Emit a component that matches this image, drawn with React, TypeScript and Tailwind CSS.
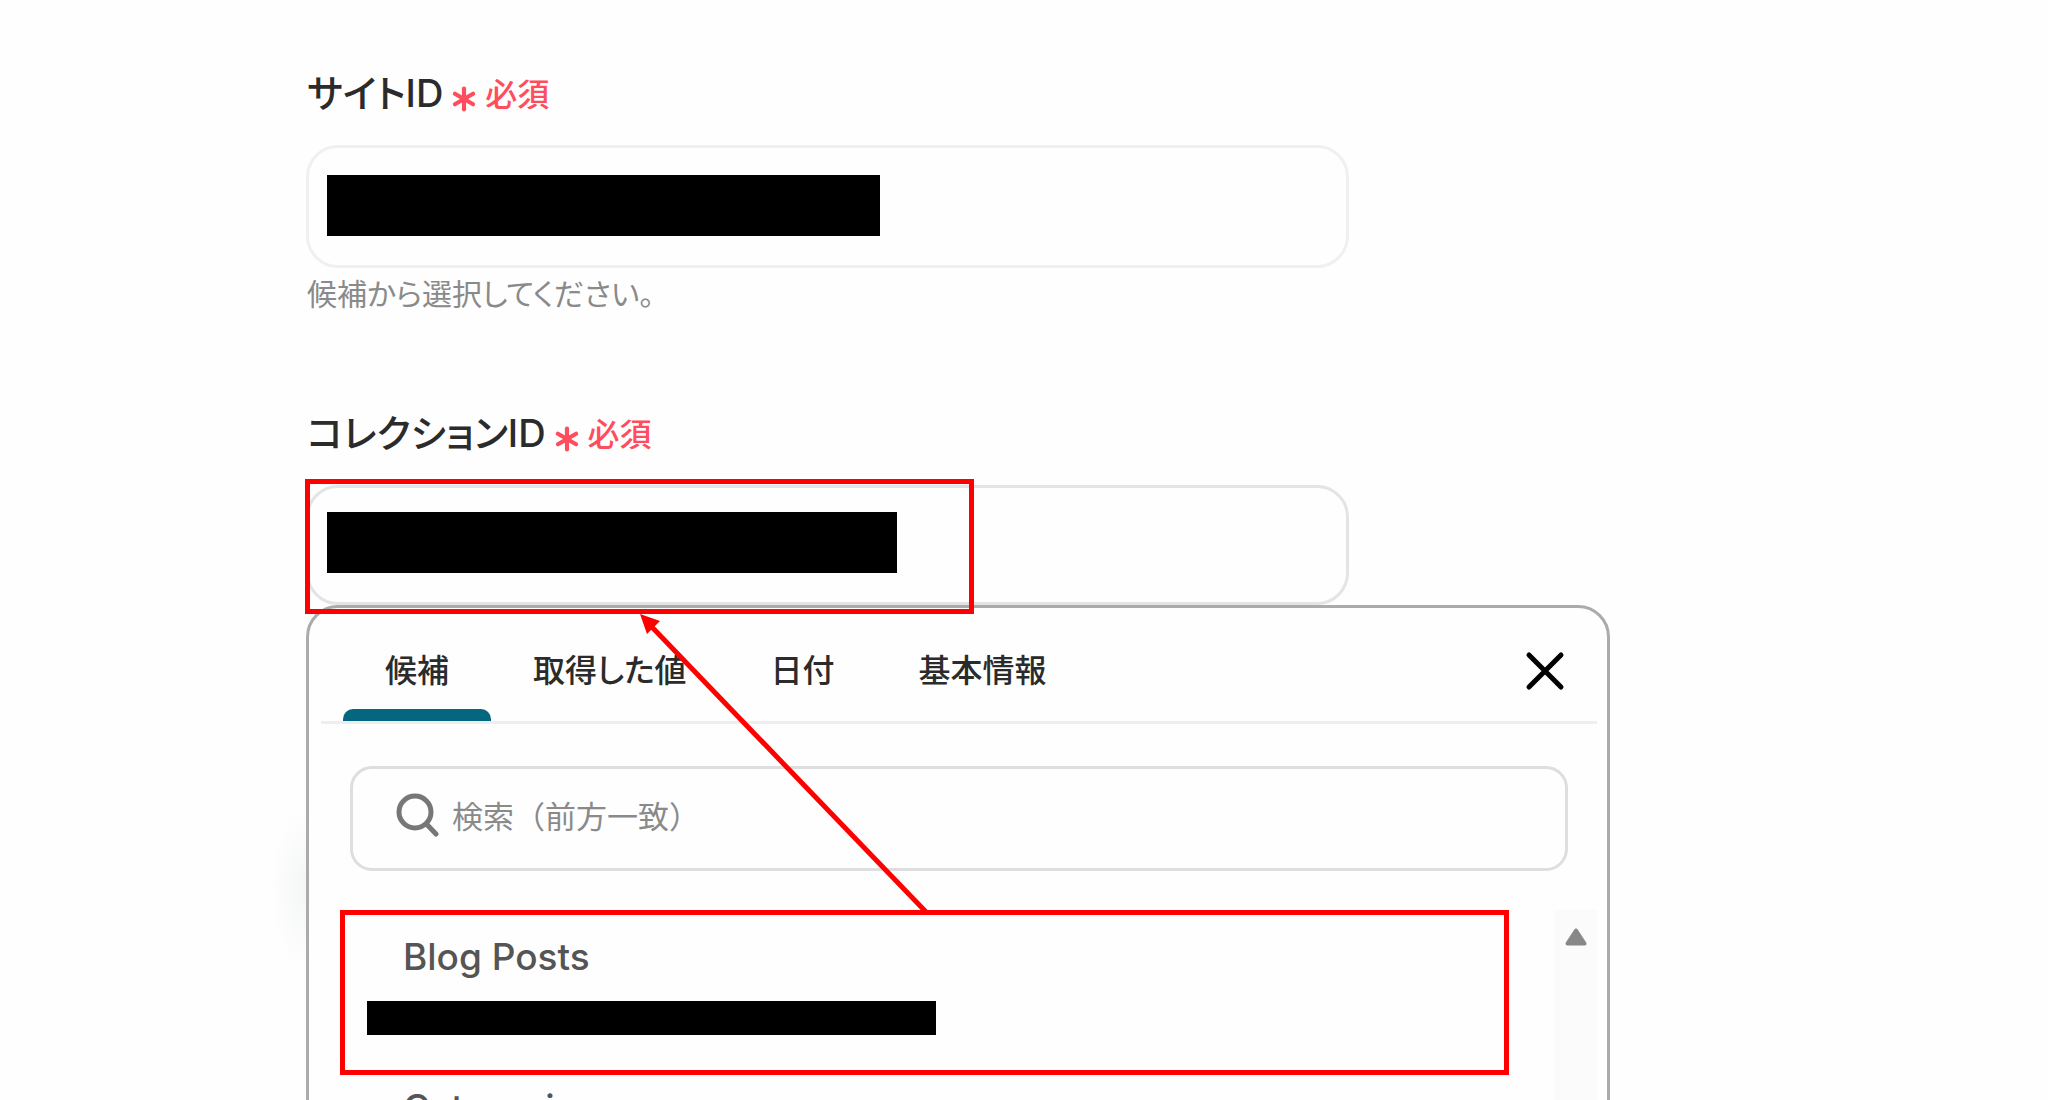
import { useState } from "react";
import { Asterisk } from "lucide-react";

const tabs = ["候補", "取得した値", "日付", "基本情報"];

const collections = [
  { name: "Blog Posts", highlighted: true },
  { name: "Categories", highlighted: false },
];

type FieldLabelProps = {
  htmlFor: string;
  text: string;
};

const FieldLabel: React.FC<FieldLabelProps> = ({ htmlFor, text }) => (
  <label htmlFor={htmlFor} className="flex items-center h-12 pl-px text-[38px] leading-[48px] font-medium text-[#2b2b2b]">
    {text}
    <span className="flex items-center pt-1 text-[32px] text-[#ff4d5e]">
      <Asterisk className="w-[42px] h-[42px] mt-2" strokeWidth={2.4} />
      必須
    </span>
  </label>
);

const App: React.FC = () => {
  const [activeTab, setActiveTab] = useState(0);
  const [siteId, setSiteId] = useState("");
  const [collectionId, setCollectionId] = useState("");
  const [query, setQuery] = useState("");

  return (
    <main className="h-screen overflow-hidden bg-[#fefefe] pl-[306px] pr-[438px] pt-[69px] font-['Inter','Noto_Sans_CJK_JP',sans-serif]">
      {/* Site ID */}
      <section className="[font-feature-settings:'palt']">
        <FieldLabel htmlFor="site-id" text="サイトID" />
        <div className="mt-7 flex items-center w-4/5 h-[123px] px-[18px] pb-0.5 rounded-[32px] border-3 border-[#eff0f2]">
          <span className="w-[553px] h-[61px] bg-black" />
          <input
            id="site-id"
            value={siteId}
            onChange={(e) => setSiteId(e.target.value)}
            className="flex-1 min-w-0 h-full text-[32px] outline-none"
          />
        </div>
        <p className="mt-1 pl-px text-[30px] leading-[44px] text-[#8a8a8a]">候補から選択してください。</p>
      </section>

      {/* Collection ID */}
      <section className="mt-[93px]">
        <div className="[font-feature-settings:'palt']">
          <FieldLabel htmlFor="collection-id" text="コレクションID" />
        </div>
        <div className="relative mt-7">
          <div className="flex items-center w-4/5 h-[120px] px-[18px] pb-1.5 rounded-[32px] border-3 border-[#e4e4e4]">
            <span className="w-[570px] h-[61px] bg-black" />
            <input
              id="collection-id"
              value={collectionId}
              onChange={(e) => setCollectionId(e.target.value)}
              className="flex-1 min-w-0 h-full text-[32px] outline-none"
            />
          </div>
          {/* callout round the chosen value */}
          <div className="absolute z-10 -left-px -top-1.5 w-[669px] h-[135px] border-5 border-[#ff0000] pointer-events-none" />
        </div>

        {/* Suggestion panel */}
        <div className="relative h-[600px] rounded-t-[32px] border-3 border-[#ababab] bg-[#fefefe] pl-3 pr-2.5">
          <div className="absolute -left-[39px] top-[200px] w-9 h-40 bg-[radial-gradient(ellipse_at_right,#f4f5f5,#fefefe_70%)]" />

          <div className="flex items-center justify-between border-b-3 border-[#eeeeee] pl-[22px] pr-7">
            <div role="tablist" className="flex [font-feature-settings:'palt']">
              {tabs.map((tab, index) => (
                <button
                  key={tab}
                  role="tab"
                  aria-selected={activeTab === index}
                  onClick={() => setActiveTab(index)}
                  className="relative h-[113px] px-[42px] pt-3 text-[32px] leading-[48px] font-medium text-[#2b2b2b]"
                >
                  {tab}
                  {activeTab === index && (
                    <span className="absolute inset-x-0 bottom-0 h-3 rounded-t-[10px] bg-[#05677f]" />
                  )}
                </button>
              ))}
            </div>
            <button aria-label="閉じる" className="p-1 mt-3">
              <svg viewBox="0 0 40 40" className="w-10 h-10" fill="none" stroke="#000" strokeWidth="5" strokeLinecap="round">
                <path d="M4 4L36 36M36 4L4 36" />
              </svg>
            </button>
          </div>

          <div className="flex items-center mt-[42px] ml-[29px] mr-[29px] h-[105px] pl-[43px] pr-6 pb-1 gap-3 rounded-[22px] border-3 border-[#dedede]">
            <svg viewBox="0 0 44 44" className="w-11 h-11 shrink-0 -mt-1" fill="none" stroke="#777777" strokeWidth="5" strokeLinecap="round">
              <circle cx="19" cy="19" r="16" />
              <path d="M30.500 31L40 41" />
            </svg>
            <input
              type="text"
              aria-label="検索"
              placeholder="検索（前方一致）"
              value={query}
              onChange={(e) => setQuery(e.target.value)}
              className="flex-1 min-w-0 text-[31px] leading-[48px] text-[#2b2b2b] placeholder:text-[#8a8a8a] outline-none"
            />
          </div>

          <div className="flex mt-[39px]">
            <ul className="flex-1 pl-[19px] pr-[45px]">
              {collections.map((item) => (
                <li
                  key={item.name}
                  className={
                    item.highlighted
                      ? "h-[165px] px-[22px] pt-5 border-5 border-[#ff0000]"
                      : "h-[165px] px-[27px] pt-[11px]"
                  }
                >
                  <button className="block w-full text-left">
                    <span className="block pl-9 text-[37px] leading-[44px] font-medium text-[#555555]">{item.name}</span>
                    <span className="block mt-[22px] w-[569px] h-[34px] bg-black" />
                  </button>
                </li>
              ))}
            </ul>
            <div className="w-[43px] h-[400px] pt-[18px] bg-[#fbfbfb]">
              <svg viewBox="0 0 22 18" className="w-[22px] h-[18px] mx-auto" fill="#888888" stroke="#888888" strokeWidth="4" strokeLinejoin="round">
                <path d="M11 2.500L19.500 15.500H2.500Z" />
              </svg>
            </div>
          </div>

          {/* arrow from the list item up to the field */}
          <svg viewBox="0 0 290 300" className="absolute left-[331px] top-1.5 w-[290px] h-[300px] pointer-events-none">
            <path d="M10 11L287 299" stroke="#ff0000" strokeWidth="5" />
            <path d="M0 0L20 7L7 20Z" fill="#ff0000" />
          </svg>
        </div>
      </section>
    </main>
  );
};

export default App;
